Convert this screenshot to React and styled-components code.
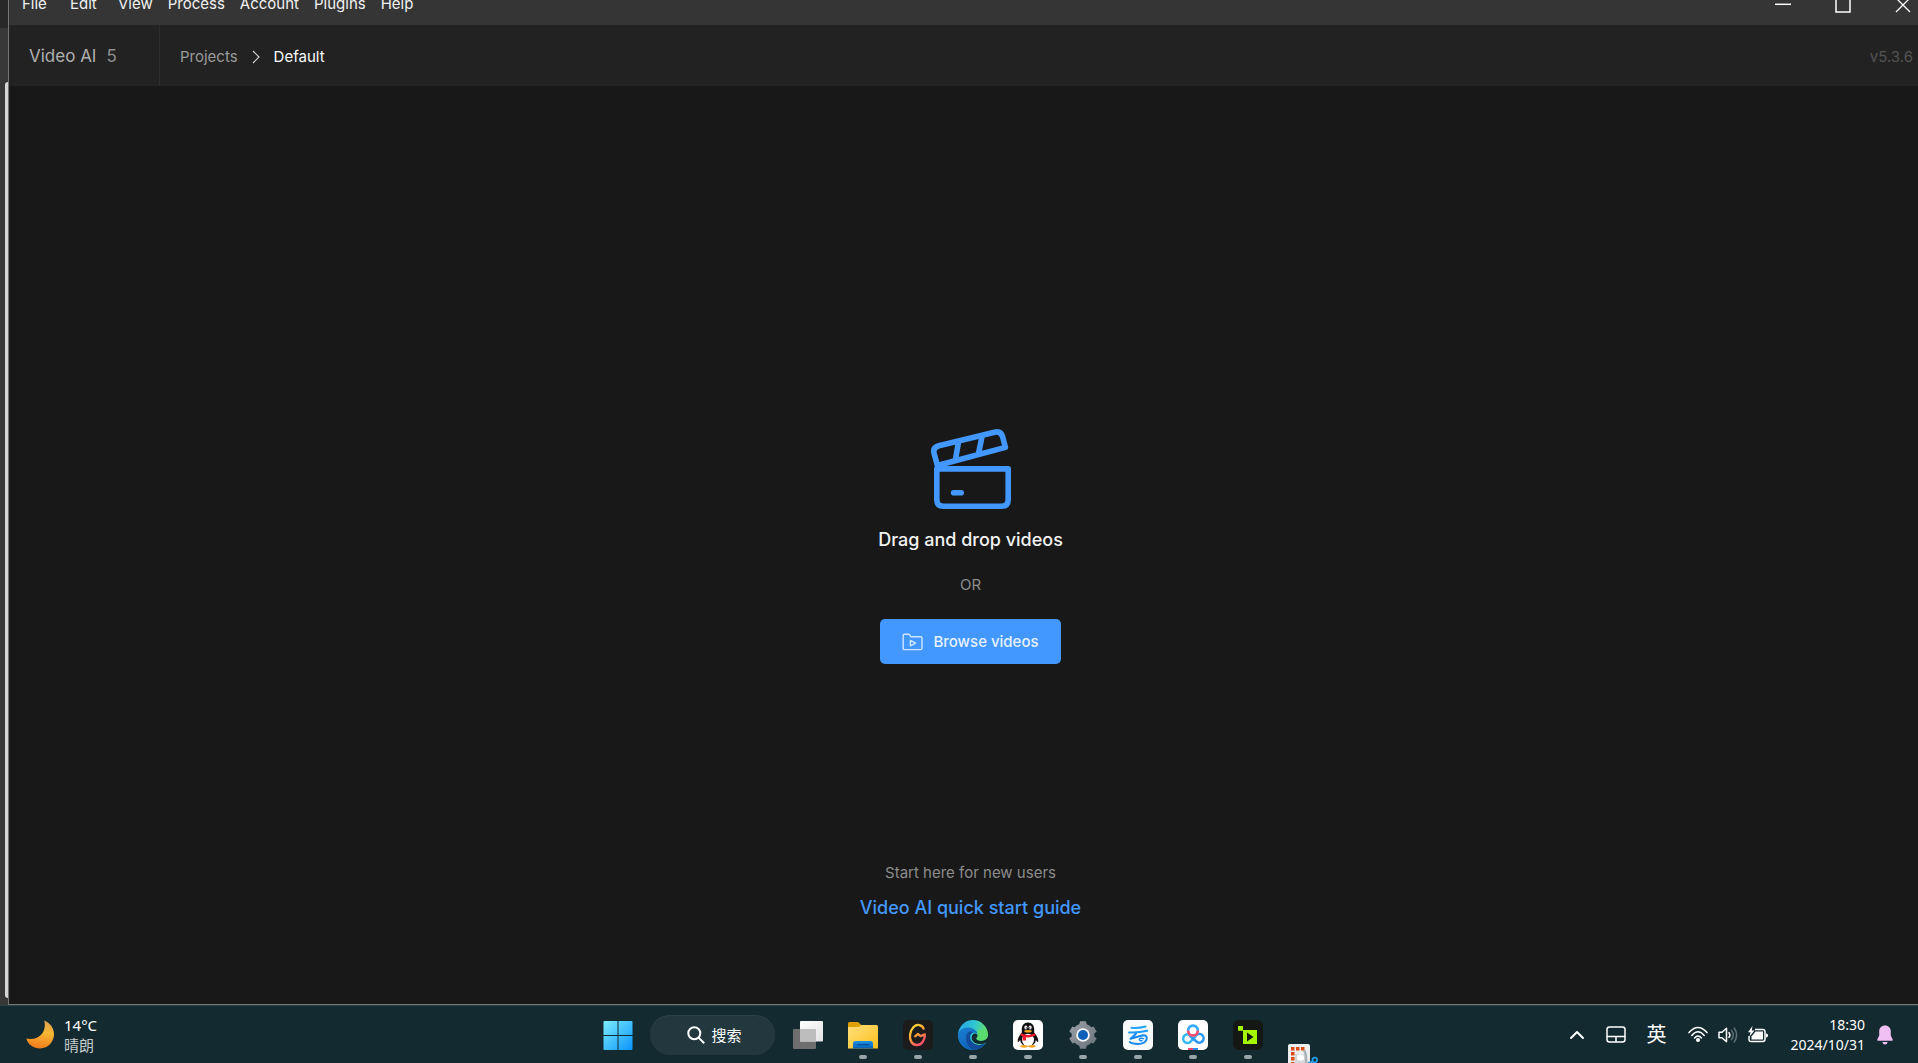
import React from "react";
import styled, { createGlobalStyle } from "styled-components";

const GlobalStyle = createGlobalStyle`
  *, *::before, *::after { box-sizing: border-box; }
  body { margin: 0; background: #181818; overflow: hidden; }
  button { border: 0; padding: 0; background: none; color: inherit; font: inherit; cursor: pointer; }
  svg { display: block; flex: none; }
`;

const Screen = styled.div`
  display: flex;
  flex-direction: column;
  height: 100vh;
  font-family: Inter, "Liberation Sans", sans-serif;
  font-size: 15px;
  color: #f2f2f2;
`;

const Workspace = styled.div`
  flex: 1;
  display: flex;
  min-height: 0;
`;

const BackWindow = styled.div`
  width: 8px;
  display: flex;
  justify-content: flex-end;
  padding: 82px 0 7px;
  background: linear-gradient(#282828 28px, #383838 28px);
`;

const BackWindowEdge = styled.div`
  width: 3px;
  background: #d6d6d6;
  border-radius: 3px 0 0 3px;
`;

const AppWindow = styled.div`
  flex: 1;
  min-width: 0;
  display: flex;
  flex-direction: column;
  border-left: 1px solid #747474;
  border-bottom: 1px solid #747878;
  background: #181818;
`;

const MenuBar = styled.div`
  display: flex;
  justify-content: space-between;
  align-items: flex-start;
  height: 25px;
  padding: 0 7px 0 5px;
  background: #353535;
`;

const MenuList = styled.nav`
  display: flex;
`;

const MenuItem = styled.button`
  min-width: 48px;
  padding: 0 7px 0 8px;
  line-height: 8px;
  text-align: left;
`;

const WindowControls = styled.div`
  display: flex;
  gap: 44px;
`;

const ControlButton = styled.button`
  width: 16px;
  height: 14px;
`;

const Header = styled.header`
  display: flex;
  align-items: stretch;
  height: 61px;
  background: #222222;
`;

const Brand = styled.div`
  display: flex;
  align-items: center;
  gap: 10px;
  width: 151px;
  padding-left: 20px;
  border-right: 1px solid #2e2e2e;
  font-size: 17px;
  color: #b0b0b0;
`;

const BrandVersion = styled.span`
  font-size: 17px;
  color: #8f8f8f;
`;

const Breadcrumb = styled.nav`
  flex: 1;
  display: flex;
  align-items: center;
  gap: 14px;
  padding: 2px 0 0 20px;
`;

const Crumb = styled.a`
  color: ${(p) => (p.$current ? "#fafafa" : "#9a9a9a")};
  text-decoration: none;
`;

const BuildVersion = styled.span`
  align-self: center;
  padding: 2px 5px 0 0;
  color: #525252;
`;

const Stage = styled.main`
  flex: 1;
  display: grid;
  grid-template-rows: 1fr auto 1fr;
  justify-items: center;
  padding: 2px 0 0 14px;
`;

const DropZone = styled.section`
  grid-row: 2;
  display: flex;
  flex-direction: column;
  align-items: center;
`;

const DropTitle = styled.h1`
  margin: 19px 0 24px;
  font-size: 18px;
  font-weight: 500;
  line-height: 22px;
`;

const OrLabel = styled.span`
  margin-bottom: 24px;
  line-height: 20px;
  color: #8c8c8c;
`;

const BrowseButton = styled.button`
  display: flex;
  align-items: center;
  gap: 10px;
  height: 45px;
  padding: 0 22px;
  border-radius: 5px;
  background: #4398ff;
  color: #e6f1ff;
  font-weight: 500;
`;

const Guide = styled.section`
  grid-row: 3;
  align-self: end;
  display: flex;
  flex-direction: column;
  align-items: center;
  gap: 14px;
  padding-bottom: 85px;
`;

const GuideHint = styled.span`
  line-height: 20px;
  color: #8c8c8c;
`;

const GuideLink = styled.a`
  font-size: 18px;
  font-weight: 500;
  line-height: 22px;
  color: #4398ff;
  text-decoration: none;
`;

const Taskbar = styled.footer`
  display: grid;
  grid-template-columns: 1fr auto 1fr;
  grid-template-rows: minmax(0, 1fr);
  height: 58px;
  border-top: 1px solid #2b4147;
  background: #132a30;
  font-family: "Noto Sans", "Noto Sans CJK SC", sans-serif;
  font-size: 15px;
  color: #ffffff;
`;

const Weather = styled.button`
  justify-self: start;
  display: flex;
  align-items: center;
  gap: 10px;
  padding-left: 26px;
  line-height: 20px;
  text-align: left;
`;

const Stack = styled.span`
  display: flex;
  flex-direction: column;
  font-size: ${(p) => p.$size}px;
  text-align: ${(p) => p.$align || "left"};
`;

const Muted = styled.span`
  color: #c3cbcd;
`;

const Tasks = styled.div`
  display: flex;
  padding-left: 2px;
`;

const TaskButton = styled.button`
  display: flex;
  flex-direction: column;
  align-items: center;
  gap: 5px;
  width: 55px;
  padding-top: ${(p) => (p.$rising ? 38 : 14)}px;
  overflow: hidden;
`;

const Running = styled.span`
  width: 8px;
  height: 4px;
  border-radius: 2px;
  background: #98a5a8;
`;

const SearchPill = styled.button`
  display: flex;
  align-items: center;
  justify-content: center;
  gap: 6px;
  width: 125px;
  height: 40px;
  margin: 9px 5px;
  padding: 0 0 1px 4px;
  border-radius: 20px;
  background: #22383e;
  box-shadow: inset 0 1px 0 #2d4248;
`;

const Tray = styled.div`
  justify-self: end;
  display: flex;
  align-items: center;
  gap: 21px;
  padding-right: 25px;
`;

const TrayGroup = styled.button`
  display: flex;
  align-items: center;
  gap: ${(p) => p.$gap || 0}px;
  font-size: 20px;
  line-height: 24px;
`;

const Clock = styled.button`
  display: flex;
  align-items: center;
  gap: 12px;
  padding-left: 2px;
  line-height: 20px;
`;

const MENUS = ["File", "Edit", "View", "Process", "Account", "Plugins", "Help"];

const ClapperIcon = () => (
  <svg width="82" height="82" viewBox="0 0 82 82" fill="none" stroke="#4398ff" strokeWidth="5.6" strokeLinejoin="round" aria-hidden="true">
    <path d="M6.8 40.9H78.2V71.5Q78.2 78.2 71.5 78.2H13.5Q6.8 78.2 6.8 71.5Z" />
    <path d="M7.4 37.5L4 25Q2.6 19.5 8.8 17.8L64.5 4.2Q71 2.6 72.6 8.8L75.4 19.4Z" />
    <path d="M28.6 13.5L25.3 32.5M52.2 7.5L48.4 26.4" />
    <path d="M23.6 64.8H31.2" strokeLinecap="round" />
  </svg>
);

const FolderPlayIcon = () => (
  <svg width="21" height="18" viewBox="0 0 21 18" fill="none" stroke="#cfe4ff" strokeWidth="1.4" strokeLinejoin="round" aria-hidden="true">
    <path d="M1.2 15.2V2.4Q1.2 1.2 2.4 1.2H7L9 3.8H18.8Q20 3.8 20 5V15.2Q20 16.6 18.6 16.6H2.6Q1.2 16.6 1.2 15.2Z" />
    <path d="M8.4 7.4L13.6 10.1L8.4 12.8Z" />
  </svg>
);

const MoonIcon = () => (
  <svg width="28" height="29" viewBox="0 0 28 29" aria-hidden="true">
    <defs><linearGradient id="moon" x1="0.6" y1="0" x2="0.4" y2="1"><stop stopColor="#e0a050" /><stop offset=".4" stopColor="#f7b733" /><stop offset="1" stopColor="#f07a1c" /></linearGradient></defs>
    <path d="M18.2 .4C24 2.6 28 7.800 28 14C28 22 22 28.400 14.200 28.400C7.800 28.400 2 25 .3 18.600C6 19.900 12.500 18.500 16 13.800C19 9.800 19.400 5 18.200 .4Z" fill="url(#moon)" />
  </svg>
);

const StartIcon = () => (
  <svg width="30" height="30" viewBox="0 0 30 30" aria-hidden="true">
    <defs><linearGradient id="win" x2="1" y2="1" x1="0" y1="0" gradientUnits="objectBoundingBox"><stop stopColor="#7ceeff" /><stop offset="1" stopColor="#0a93fb" /></linearGradient></defs>
    <path fill="url(#win)" d="M1.500 1H14.500V15H.5V2Q.5 1 1.500 1ZM15.500 1H28.500Q29.500 1 29.500 2V15H15.500ZM.5 16H14.500V30H1.500Q.5 30 .5 29ZM15.500 16H29.500V29Q29.500 30 28.500 30H15.500Z" />
  </svg>
);

const SearchIcon = () => (
  <svg width="18" height="18" viewBox="0 0 18 18" fill="none" stroke="#fff" strokeWidth="2" aria-hidden="true">
    <circle cx="7.300" cy="7.300" r="6" /><path d="M11.600 11.600L17.200 17.200" />
  </svg>
);

const TaskViewIcon = () => (
  <svg width="30" height="30" viewBox="0 0 30 30" aria-hidden="true">
    <defs><linearGradient id="tv" x2="1" y2="1"><stop stopColor="#fff" /><stop offset="1" stopColor="#e2e2e2" /></linearGradient></defs>
    <rect x="0" y="9" width="23" height="20" rx="1" fill="#6e6e6e" />
    <rect x="7" y="1" width="23" height="20.500" rx="1" fill="url(#tv)" />
    <path d="M7 9H23V21.500H7Z" fill="#bdbdbd" />
  </svg>
);

const ExplorerIcon = () => (
  <svg width="30" height="30" viewBox="0 0 30 30" aria-hidden="true">
    <defs>
      <linearGradient id="fold" x2="1" y2="1"><stop stopColor="#ffe07a" /><stop offset="1" stopColor="#fdbf1e" /></linearGradient>
      <linearGradient id="foldb" x2="0" y2="1"><stop stopColor="#1b93e6" /><stop offset="1" stopColor="#0a5fb4" /></linearGradient>
    </defs>
    <path d="M0 3.500Q0 2 1.500 2H9.500Q10.500 2 11.200 2.900L13.500 5.200V12H0Z" fill="#dfa000" />
    <path d="M0 7H10.500L13.500 5H28.500Q30 5 30 6.500V28.500H0Z" fill="url(#fold)" />
    <path d="M5 28.500V23.500Q5 21 7.500 21H22.500Q25 21 25 23.500V28.500Z" fill="url(#foldb)" />
    <path d="M9 24.600H21" stroke="#0a4c95" strokeWidth="1.200" />
  </svg>
);

const WeGameIcon = () => (
  <svg width="30" height="30" viewBox="0 0 30 30" aria-hidden="true">
    <defs><linearGradient id="wg" x1="0" y1="0" x2=".6" y2="1"><stop stopColor="#ffe52e" /><stop offset=".55" stopColor="#ffa03a" /><stop offset="1" stopColor="#ff4f6a" /></linearGradient></defs>
    <rect width="30" height="30" rx="5" fill="#1c1b1c" />
    <path d="M20.600 8.600C19 4.600 14 3.700 10.600 7C6.800 11 5.800 18 8.400 22C11 26.200 17 26 20 21.500C21.400 19.300 22 16.500 21.800 14.300L17.600 16.200L14.800 14L12.200 16.300" fill="none" stroke="url(#wg)" strokeWidth="2.300" strokeLinejoin="round" strokeLinecap="round" />
  </svg>
);

const EdgeIcon = () => (
  <svg width="30" height="30" viewBox="0 0 30 30" aria-hidden="true">
    <defs>
      <linearGradient id="eg" x1="0" y1=".3" x2="1" y2=".5"><stop stopColor="#2aa5e8" /><stop offset=".5" stopColor="#30c5d2" /><stop offset="1" stopColor="#6ae45c" /></linearGradient>
      <linearGradient id="eb" x1="0" y1="0" x2=".6" y2="1"><stop stopColor="#1b7fd0" /><stop offset="1" stopColor="#0d61b8" /></linearGradient>
    </defs>
    <circle cx="15" cy="15" r="15" fill="url(#eg)" />
    <path d="M0 14.500C1.500 9 6.500 7 11 7.600C16.500 8.300 20 12 19.800 15.500C19 12.500 15.500 11.500 13.200 13.800C10.500 17 12.500 23.500 19 24.800C22.500 25.500 26 24.200 27.500 22.800C25 27.500 20 30 15 30C6 30 0 23 0 14.500Z" fill="url(#eb)" />
    <path d="M9.500 13C7 16.500 8 24 12 27.500C14 29.300 16.500 30 17.500 29.800C22 29.200 25.600 26.500 27.700 22.700C25.500 24.400 22 25.300 19 24.700C12.500 23.300 10.500 17 13.200 13.800C13.800 13 14.800 12.400 15.500 12.300C13.500 11.200 11 11.300 9.500 13Z" fill="#124b9b" />
    <path d="M19.800 15.500C19.600 17.500 18.300 18 18.500 19C19 20.500 22.500 21 25 20.500C27.700 19.900 29.600 18.500 29.900 15.500L34 22L27.500 22.800C24 25 16 24.800 14 19.500C12.500 14.500 17 11 19.800 15.500Z" fill="#132a30" />
    <path d="M19.800 15.500C19.600 17.300 18 18 18.500 19C19.500 20.800 23 21 25.500 20.200C28.300 19.200 30 17 30 14.500C29 10 24 8 19 11Z" fill="#5adb70" />
  </svg>
);

const QQIcon = () => (
  <svg width="30" height="30" viewBox="0 0 30 30" aria-hidden="true">
    <rect width="30" height="30" rx="5" fill="#fff" />
    <path d="M15 2.500C11 2.500 8.800 5.500 8.800 9.500V12.500C6.500 15.300 4.300 18.500 4.700 21.500C5 22.700 6.500 21 7.200 20C7.400 23.500 10.500 26.500 15 26.500C19.500 26.500 22.600 23.500 22.800 20C23.500 21 25 22.700 25.300 21.500C25.700 18.500 23.500 15.300 21.200 12.500V9.500C21.200 5.500 19 2.500 15 2.500Z" fill="#111" />
    <ellipse cx="15" cy="20" rx="6" ry="6.300" fill="#fff" />
    <ellipse cx="12.900" cy="7.600" rx="1.500" ry="2" fill="#fff" /><ellipse cx="17.100" cy="7.600" rx="1.500" ry="2" fill="#fff" />
    <circle cx="13.300" cy="7.900" r=".7" fill="#111" /><circle cx="16.700" cy="7.900" r=".7" fill="#111" />
    <ellipse cx="15" cy="11.300" rx="3.800" ry="1.200" fill="#f6a61c" />
    <path d="M8 13.200Q15 16.600 22 13.200L22.600 15.500Q17 18 13 17.300V20.500H9.500L9.800 16.400L7.300 15.300Z" fill="#ee1c2b" />
    <ellipse cx="11" cy="26.300" rx="3.700" ry="1.400" fill="#f6a61c" /><ellipse cx="19" cy="26.300" rx="3.700" ry="1.400" fill="#f6a61c" />
  </svg>
);

const GearIcon = () => (
  <svg width="30" height="30" viewBox="0 0 30 30" aria-hidden="true">
    <defs><linearGradient id="gr" x2="1" y2="1"><stop stopColor="#9ba1a8" /><stop offset="1" stopColor="#69717a" /></linearGradient></defs>
    <g fill="url(#gr)">
      <circle cx="15" cy="15" r="11.300" />
      <path d="M12 1.200H18L19.300 7H10.700ZM12 28.800H18L19.300 23H10.700ZM1.300 11.600L4.400 6.500L10 8.500L6 15.500ZM28.700 11.600L25.600 6.500L20 8.500L24 15.500ZM1.300 18.400L4.400 23.500L10 21.500L6 14.500ZM28.700 18.400L25.600 23.500L20 21.500L24 14.500Z" />
    </g>
    <circle cx="15" cy="15" r="6.800" fill="#f4f5f6" /><circle cx="15" cy="15" r="5" fill="#0e60b8" />
  </svg>
);

const CloudGlyphIcon = () => (
  <svg width="30" height="30" viewBox="0 0 30 30" fill="none" aria-hidden="true">
    <rect width="30" height="30" rx="5" fill="#f8fafc" />
    <g strokeLinecap="round" strokeLinejoin="round" strokeWidth="2">
      <path d="M8.500 7.800Q15 8.600 22.500 6.500" stroke="#22a5f8" />
      <path d="M6 12.400Q15 13 24.200 10.800" stroke="#1e9cf6" />
      <path d="M13 13.500Q10.500 16.500 7.500 18.800Q14 17 20 15.300Q24.800 15.300 23.500 19.500Q22 24 15 23.900Q9 23.800 6.800 22" stroke="#1789f1" />
      <path d="M20.500 18.600Q16.800 17.500 16.300 19.600Q16.800 21.200 19 20.600" stroke="#1789f1" strokeWidth="1.500" />
    </g>
  </svg>
);

const NetdiskIcon = () => (
  <svg width="30" height="30" viewBox="0 0 30 30" fill="none" aria-hidden="true">
    <rect width="30" height="30" rx="5" fill="#fff" />
    <g strokeWidth="2.600" strokeLinecap="round">
      <path d="M17.500 16.500L13.200 20.800A4.300 4.300 0 1 1 11.600 14.900" stroke="#35b8f5" />
      <path d="M12.500 16.500L18.200 21.300A4.300 4.300 0 1 0 18.600 14.900" stroke="#2b98f8" />
      <path d="M10.200 11.500A4.900 4.900 0 1 1 19.800 11.500" stroke="#35a9fb" />
      <path d="M10.200 11.500A4.900 4.900 0 0 0 19.800 11.500" stroke="#fa4f72" />
    </g>
    <path d="M10 28H15V30H10Z" fill="#f4466b" /><path d="M15 28H20V30H15Z" fill="#2e8df5" />
  </svg>
);

const TopazIcon = () => (
  <svg width="30" height="30" viewBox="0 0 30 30" aria-hidden="true">
    <rect width="30" height="30" rx="6" fill="#151715" />
    <path d="M5 6H10V10H24V24H10V10.800H5Z" fill="#a4f500" />
    <path d="M14 12.500L20.500 17L14 21.500Z" fill="#151715" />
  </svg>
);

const SnipIcon = () => (
  <svg width="30" height="30" viewBox="0 0 30 30" fill="none" aria-hidden="true">
    <rect width="22" height="26" rx="2" fill="#eceef0" />
    <path d="M7 10H17V26H7Z" fill="#d5d9dc" />
    <rect x="9" y="10.500" width="7" height="6" rx="2" fill="#fff" />
    <path d="M3 3H6.500V6.500H3ZM8 3H11.500V6.500H8ZM13 3H16.500V6.500H13ZM3 8H6.500V11.500H3ZM3 13H6.500V16.500H3ZM3 18H6.500V21.500H3Z" fill="#dc4a16" />
    <path d="M16 6.500Q18.500 9 18.200 20" stroke="#aab2b8" strokeWidth="2.500" />
    <circle cx="26.800" cy="16" r="2.300" stroke="#24a2e8" strokeWidth="1.700" /><path d="M25 17.500L20 19" stroke="#24a2e8" strokeWidth="2" />
  </svg>
);

const TASKS = [
  { name: "Task view", Icon: TaskViewIcon },
  { name: "File Explorer", Icon: ExplorerIcon, running: true },
  { name: "WeGame", Icon: WeGameIcon, running: true },
  { name: "Edge", Icon: EdgeIcon, running: true },
  { name: "QQ", Icon: QQIcon, running: true },
  { name: "Settings", Icon: GearIcon, running: true },
  { name: "Cloud", Icon: CloudGlyphIcon, running: true },
  { name: "Netdisk", Icon: NetdiskIcon, running: true },
  { name: "Video AI", Icon: TopazIcon, running: true },
  { name: "Snipping Tool", Icon: SnipIcon, rising: true },
];

const WifiIcon = () => (
  <svg width="20" height="17" viewBox="0 0 20 17" fill="none" stroke="#fff" strokeWidth="1.500" strokeLinecap="round" aria-hidden="true">
    <path d="M1 6.600Q10-3.600 19 6.600M3.800 9.400Q10 2.200 16.200 9.400M6.600 12Q10 7.800 13.400 12" />
    <circle cx="10" cy="14" r="2" fill="#fff" stroke="none" />
  </svg>
);

const SpeakerIcon = () => (
  <svg width="20" height="18" viewBox="0 0 20 18" fill="none" stroke="#fff" strokeWidth="1.500" strokeLinecap="round" strokeLinejoin="round" aria-hidden="true">
    <path d="M1 6.200H4L8.500 2.200V15.800L4 11.800H1Z" /><path d="M11 6.600Q12.800 9 11 11.400" />
    <path d="M13.500 4.400Q17 9 13.500 13.600M16.200 2Q21 9 16.200 16" stroke="#5d7175" />
  </svg>
);

const BatteryIcon = () => (
  <svg width="20" height="18" viewBox="0 0 20 18" fill="none" aria-hidden="true">
    <path d="M7 3.500H14.800Q17 3.500 17 5.700V13.300Q17 15.500 14.800 15.500H3.200Q1 15.500 1 13.300V10" stroke="#fff" strokeWidth="1.500" />
    <path d="M7.500 5.500H15V13.500H3.500V10.500Z" fill="#fff" /><path d="M18 7.500H18.700Q20 8 20 9.500Q20 11 18.700 11.500H18Z" fill="#fff" />
    <path d="M4.500 0L0 6.300H2.500L1.600 10.500L6.500 4.500H3.800Z" fill="#fff" />
  </svg>
);

const BellIcon = () => (
  <svg width="16" height="20" viewBox="0 0 16 20" fill="#f0bff3" aria-hidden="true">
    <path d="M8 .5C4.500 .5 2.200 3 2.200 6.300V10.500L.3 14.500Q0 15.800 1 15.800H15Q16 15.800 15.700 14.500L13.800 10.500V6.300C13.800 3 11.500 .5 8 .5ZM5.300 17H10.700Q10 19.500 8 19.500Q6 19.500 5.300 17Z" />
  </svg>
);

export default function App() {
  return (
    <Screen>
      <GlobalStyle />
      <Workspace>
        <BackWindow><BackWindowEdge /></BackWindow>
        <AppWindow>
          <MenuBar>
            <MenuList>{MENUS.map((m) => <MenuItem key={m}>{m}</MenuItem>)}</MenuList>
            <WindowControls>
              <ControlButton aria-label="Minimize">
                <svg width="16" height="14" stroke="#fff" strokeWidth="1.500"><path d="M0 4.300H16" /></svg>
              </ControlButton>
              <ControlButton aria-label="Maximize">
                <svg width="16" height="14" fill="none" stroke="#fff" strokeWidth="1.500"><path d="M1 -3H15V12H1Z" /></svg>
              </ControlButton>
              <ControlButton aria-label="Close">
                <svg width="16" height="14" fill="none" stroke="#fff" strokeWidth="1.300"><path d="M1 -2L15 12M15 -2L1 12" /></svg>
              </ControlButton>
            </WindowControls>
          </MenuBar>
          <Header>
            <Brand>Video AI<BrandVersion>5</BrandVersion></Brand>
            <Breadcrumb>
              <Crumb href="#projects">Projects</Crumb>
              <svg width="8" height="14" fill="none" stroke="#d0d0d0" strokeWidth="1.200" aria-hidden="true"><path d="M1 1L7 7L1 13" /></svg>
              <Crumb href="#default" $current>Default</Crumb>
            </Breadcrumb>
            <BuildVersion>v5.3.6</BuildVersion>
          </Header>
          <Stage>
            <DropZone>
              <ClapperIcon />
              <DropTitle>Drag and drop videos</DropTitle>
              <OrLabel>OR</OrLabel>
              <BrowseButton><FolderPlayIcon />Browse videos</BrowseButton>
            </DropZone>
            <Guide>
              <GuideHint>Start here for new users</GuideHint>
              <GuideLink href="#guide">Video AI quick start guide</GuideLink>
            </Guide>
          </Stage>
        </AppWindow>
      </Workspace>
      <Taskbar>
        <Weather>
          <MoonIcon />
          <Stack $size={15}><span>14°C</span><Muted>晴朗</Muted></Stack>
        </Weather>
        <Tasks>
          <TaskButton aria-label="Start"><StartIcon /></TaskButton>
          <SearchPill><SearchIcon />搜索</SearchPill>
          {TASKS.map(({ name, Icon, running, rising }) => (
            <TaskButton key={name} aria-label={name} $rising={rising}>
              <Icon />
              {running && <Running />}
            </TaskButton>
          ))}
        </Tasks>
        <Tray>
          <TrayGroup aria-label="Hidden icons">
            <svg width="16" height="10" fill="none" stroke="#fff" strokeWidth="2" strokeLinecap="round" strokeLinejoin="round"><path d="M2 8L8 2L14 8" /></svg>
          </TrayGroup>
          <TrayGroup aria-label="Touchpad">
            <svg width="20" height="17" fill="none" stroke="#fff" strokeWidth="1.500"><rect x="1" y="1" width="18" height="15" rx="2.500" /><path d="M1 10.500H19M10 10.500V16" /></svg>
          </TrayGroup>
          <TrayGroup>英</TrayGroup>
          <TrayGroup aria-label="Network, volume and battery" $gap={10}><WifiIcon /><SpeakerIcon /><BatteryIcon /></TrayGroup>
          <Clock>
            <Stack $size={14} $align="right"><span>18:30</span><span>2024/10/31</span></Stack>
            <BellIcon />
          </Clock>
        </Tray>
      </Taskbar>
    </Screen>
  );
}
